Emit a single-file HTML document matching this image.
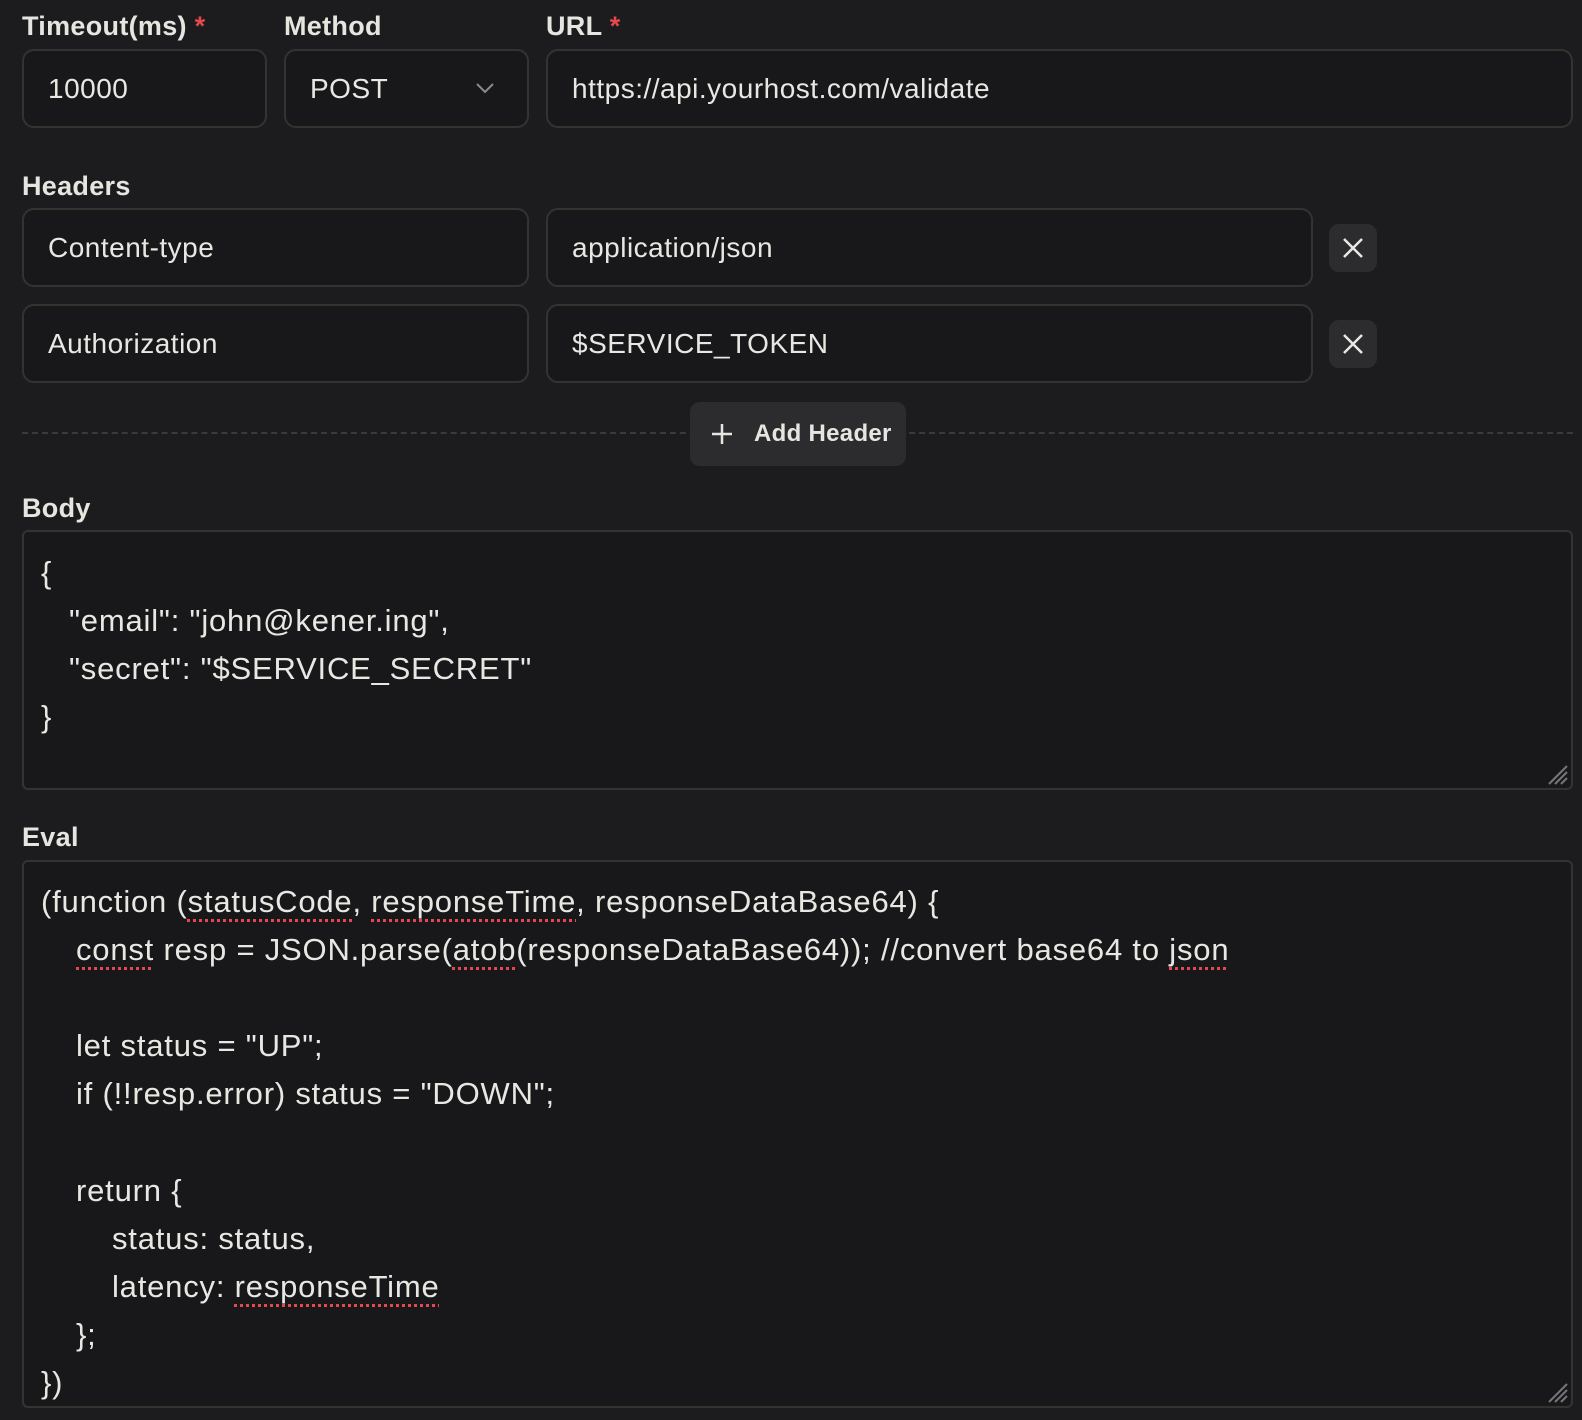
<!DOCTYPE html>
<html><head><meta charset="utf-8"><style>
*{box-sizing:border-box;margin:0;padding:0}
body{width:1582px;height:1420px;background:#1c1c1e;font-family:"Liberation Sans",Arial,sans-serif;color:#e8e8e3;position:relative;overflow:hidden}
.a{position:absolute}
.lbl{font-size:27px;font-weight:bold;color:#e6e6e1;line-height:30px;letter-spacing:0.3px}
.req{color:#e5484d}
.inp{position:absolute;background:#18181b;border:2px solid #34332f;border-radius:12px;font-size:28px;letter-spacing:0.5px;line-height:1;display:flex;align-items:center;padding-left:24px;color:#e8e8e3}
.xb{position:absolute;width:48px;height:48px;background:#2c2c2e;border-radius:10px}
.ta{position:absolute;background:#18181b;border:2px solid #34332f;border-radius:6px;font-size:31px;letter-spacing:0.8px;padding-left:17px}
.ln{height:48.1px;line-height:48.1px;white-space:pre}
.sq{text-decoration:underline dotted #e5484d;text-decoration-thickness:3px;text-underline-offset:7px}
</style></head><body>
<div class="a lbl" style="left:22px;top:11px">Timeout(ms) <span class="req">*</span></div>
<div class="a lbl" style="left:284px;top:11px">Method</div>
<div class="a lbl" style="left:546px;top:11px">URL <span class="req">*</span></div>
<div class="inp" style="left:22px;top:49px;width:245px;height:79px">10000</div>
<div class="inp" style="left:284px;top:49px;width:245px;height:79px">POST
<svg class="a" style="left:188px;top:30px" width="22" height="14" viewBox="0 0 22 14"><path d="M3 3l8 8 8-8" stroke="#8a8a86" stroke-width="2" fill="none"/></svg></div>
<div class="inp" style="left:546px;top:49px;width:1027px;height:79px">https://api.yourhost.com/validate</div>

<div class="a lbl" style="left:22px;top:171px">Headers</div>
<div class="inp" style="left:22px;top:208px;width:507px;height:79px">Content-type</div>
<div class="inp" style="left:546px;top:208px;width:767px;height:79px">application/json</div>
<div class="xb" style="left:1329px;top:224px"><svg width="48" height="48"><path d="M15 15l18 18M33 15L15 33" stroke="#e8e8e3" stroke-width="2.5"/></svg></div>
<div class="inp" style="left:22px;top:304px;width:507px;height:79px">Authorization</div>
<div class="inp" style="left:546px;top:304px;width:767px;height:79px">$SERVICE_TOKEN</div>
<div class="xb" style="left:1329px;top:320px"><svg width="48" height="48"><path d="M15 15l18 18M33 15L15 33" stroke="#e8e8e3" stroke-width="2.5"/></svg></div>

<div class="a" style="left:22px;top:432px;width:1551px;border-top:2px dashed #3a3a38"></div>
<div class="a" style="left:690px;top:402px;width:216px;height:64px;background:#2c2c2e;border-radius:10px;font-size:24px;font-weight:bold;line-height:64px;padding-left:64px;color:#e6e6e1;letter-spacing:0.3px">Add Header
<svg class="a" style="left:20px;top:20px" width="24" height="24"><path d="M12 2v20M2 12h20" stroke="#e6e6e1" stroke-width="2.5"/></svg></div>

<div class="a lbl" style="left:22px;top:493px">Body</div>
<div class="ta" style="left:22px;top:530px;width:1551px;height:260px;padding-top:17px">
<div class="ln">{</div>
<div class="ln" style="padding-left:28px">"email": "john@kener.ing",</div>
<div class="ln" style="padding-left:28px">"secret": "$SERVICE_SECRET"</div>
<div class="ln">}</div>
<svg class="a" style="right:2px;bottom:2px" width="26" height="26"><path d="M24 6L6 24M24 12L12 24M24 18L18 24" stroke="#77777a" stroke-width="2"/></svg>
</div>

<div class="a lbl" style="left:22px;top:822px">Eval</div>
<div class="ta" style="left:22px;top:860px;width:1551px;height:548px;padding-top:16px">
<div class="ln">(function (<span class="sq">statusCode</span>, <span class="sq">responseTime</span>, responseDataBase64) {</div>
<div class="ln" style="padding-left:35px"><span class="sq">const</span> resp = JSON.parse(<span class="sq">atob</span>(responseDataBase64)); //convert base64 to <span class="sq">json</span></div>
<div class="ln"> </div>
<div class="ln" style="padding-left:35px">let status = "UP";</div>
<div class="ln" style="padding-left:35px">if (!!resp.error) status = "DOWN";</div>
<div class="ln"> </div>
<div class="ln" style="padding-left:35px">return {</div>
<div class="ln" style="padding-left:71px">status: status,</div>
<div class="ln" style="padding-left:71px">latency: <span class="sq">responseTime</span></div>
<div class="ln" style="padding-left:35px">};</div>
<div class="ln">})</div>
<svg class="a" style="right:2px;bottom:2px" width="26" height="26"><path d="M24 6L6 24M24 12L12 24M24 18L18 24" stroke="#77777a" stroke-width="2"/></svg>
</div>
</body></html>
